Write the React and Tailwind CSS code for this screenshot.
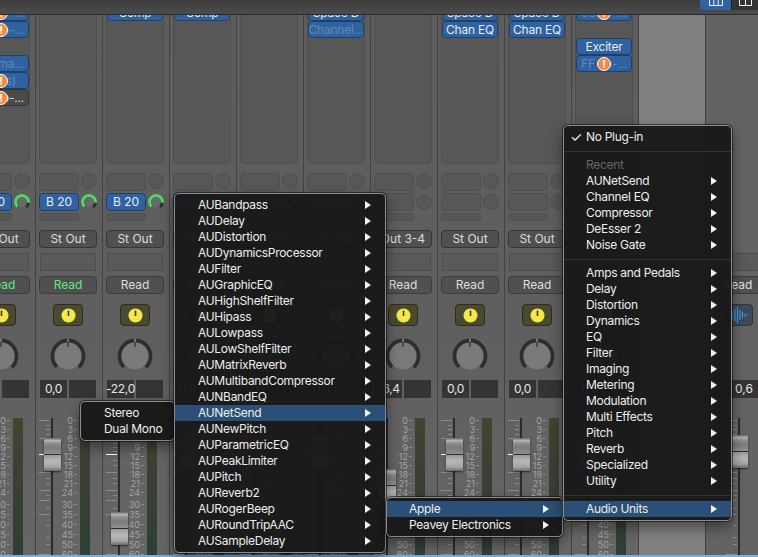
import { Fragment } from "react";

const scale = [
  ["0", 2], ["3", 11], ["6", 20], ["9", 29], ["12", 38], ["15", 47], ["18", 56], ["21", 65],
  ["24", 74], ["30", 86], ["35", 96], ["40", 106], ["45", 116], ["50", 126], ["60", 136],
];

// fader ticks, left of the track: [y, long]
const ticks = [
  [2, 1], [7, 0], [11, 0], [16, 0], [20, 1], [25, 0], [29, 0], [33, 0], [42, 0], [47, 0], [54, 1],
  [60, 0], [65, 0], [72, 1], [77, 0], [82, 1], [90, 0], [96, 1], [107, 0], [119, 0], [126, 0], [136, 1],
];

const auList = [
  "AUBandpass", "AUDelay", "AUDistortion", "AUDynamicsProcessor", "AUFilter", "AUGraphicEQ",
  "AUHighShelfFilter", "AUHipass", "AULowpass", "AULowShelfFilter", "AUMatrixReverb",
  "AUMultibandCompressor", "AUNBandEQ", "AUNetSend", "AUNewPitch", "AUParametricEQ",
  "AUPeakLimiter", "AUPitch", "AUReverb2", "AURogerBeep", "AURoundTripAAC", "AUSampleDelay",
];
const recent = ["AUNetSend", "Channel EQ", "Compressor", "DeEsser 2", "Noise Gate"];
const categories = [
  "Amps and Pedals", "Delay", "Distortion", "Dynamics", "EQ", "Filter", "Imaging", "Metering",
  "Modulation", "Multi Effects", "Pitch", "Reverb", "Specialized", "Utility",
];

const strips = [
  {
    slots: [
      { right: "...", dim: true, warn: true },
      { right: "o-...", dim: true, warn: true },
      null,
      { right: "ma...", dim: true },
      { right: "s)", dim: true, warn: true, pr: "pr-[12px]" },
      { right: "o-...", warn: true, dark: true },
    ],
    send: true, out: "St Out", green: true, value: "0,0", cap: 20,
  },
  { slots: [], send: true, out: "St Out", green: true, value: "0,0", cap: 20 },
  { slots: [{ text: "Comp" }], send: true, out: "St Out", value: "-22,0", cap: 94 },
  { slots: [{ text: "Comp" }], send: true, out: "St Out", value: "0,0", cap: 20 },
  { slots: [], send: true, out: "St Out", value: "0,0", cap: 20 },
  { slots: [{ text: "Space D" }, { text: "Channel...", dim: true }], send: true, out: "St Out", value: "0,0", cap: 20 },
  { slots: [], out: "Out 3-4", value: "-6,4", cap: 51 },
  { slots: [{ text: "Space D" }, { text: "Chan EQ" }], out: "St Out", value: "0,0", cap: 20 },
  { slots: [{ text: "Space D" }, { text: "Chan EQ" }], out: "St Out", value: "0,0", cap: 20 },
  {
    slots: [
      { left: "SSD", right: "...", dim: true, warn: true },
      null,
      { text: "Exciter" },
      { left: "FF", right: "o-...", dim: true, warn: true },
    ],
    out: "St Out", value: "0,0", cap: 20,
  },
];

function Arrow() {
  return (
    <svg width="6" height="8" viewBox="0 0 6 8" className="shrink-0">
      <polygon points="0,0 6,4 0,8" fill="#f2f2f2" />
    </svg>
  );
}

function MenuRow({ label, active, disabled, arrow = true, pad, arrowPad }) {
  return (
    <div
      className={`flex h-4 items-center justify-between whitespace-nowrap text-[12px] leading-4 tracking-[-0.3px] ${pad} ${arrowPad} ${
        active ? "bg-[#2b4f76]" : ""
      } ${disabled ? "text-[#666666]" : "text-[#eeeeee]"}`}
    >
      <span>{label}</span>
      {arrow && <Arrow />}
    </div>
  );
}

function Warn() {
  return (
    <span className="absolute left-[20px] top-[1px] flex h-[14px] w-[14px] items-center justify-center rounded-full border border-white bg-[#f58a3c] text-[11px] font-bold leading-none text-white">
      !
    </span>
  );
}

function Slot({ slot }) {
  if (!slot) return <div className="h-[17px]" />;
  return (
    <div
      className={`relative flex h-[17px] items-center whitespace-nowrap rounded-[4px] border pl-1 text-[12px] leading-none tracking-[-0.2px] ${
        slot.pr || "pr-1"
      } ${slot.dark ? "border-[#353535] bg-[#4a4a4a] text-[#cfcfcf]" : "border-[#1f4068] bg-[#2f629f]"} ${
        slot.dim ? "text-[#5f8abb]" : slot.dark ? "" : "text-[#e6edf5]"
      } ${slot.text ? "justify-center" : "justify-between"}`}
    >
      {slot.text ? (
        <span>{slot.text}</span>
      ) : (
        <Fragment>
          <span>{slot.left}</span>
          <span>{slot.right}</span>
        </Fragment>
      )}
      {slot.warn && <Warn />}
    </div>
  );
}

function SendKnob() {
  return (
    <svg width="16" height="16" viewBox="0 0 16 16" className="shrink-0">
      <circle cx="8" cy="8" r="5" fill="#6a6a6a" />
      <circle cx="8" cy="8" r="6.5" fill="none" stroke="#2f2f2f" strokeWidth="3" strokeDasharray="30.6 40.8" transform="rotate(135 8 8)" />
      <circle cx="8" cy="8" r="6.5" fill="none" stroke="#4fd768" strokeWidth="3" strokeDasharray="25.5 40.8" transform="rotate(135 8 8)" />
    </svg>
  );
}

function PanKnob() {
  return (
    <svg width="36" height="36" viewBox="0 0 36 36">
      <circle cx="18" cy="18" r="13.5" fill="#7a7a7a" />
      <circle cx="18" cy="18" r="15.6" fill="none" stroke="#2e2e2e" strokeWidth="3.6" strokeDasharray="73.5 98" transform="rotate(135 18 18)" />
      <line x1="18" y1="0.5" x2="18" y2="4" stroke="#4fd768" strokeWidth="1.2" />
      <line x1="18" y1="4" x2="18" y2="9" stroke="#2a2a2a" strokeWidth="1.2" />
    </svg>
  );
}

function SoloDial() {
  return (
    <svg width="15" height="15" viewBox="0 0 15 15">
      <circle cx="7.5" cy="7.5" r="7" fill="#f4e84a" />
      <line x1="7.5" y1="2.5" x2="7.5" y2="8" stroke="#3a3a22" strokeWidth="1.6" />
    </svg>
  );
}

function FaderCap({ top, left }) {
  return (
    <div
      className={`absolute h-[33px] w-[17px] rounded-[1px] bg-[linear-gradient(180deg,#6a6a6a_0%,#b5b5b5_8%,#8d8d8d_16%,#7b7b7b_30%,#8f8f8f_47%,#2d2d2d_48%,#2d2d2d_51%,#9a9a9a_52%,#b9b9b9_70%,#a3a3a3_88%,#6b6b6b_100%)] shadow-[0_1px_2px_rgba(0,0,0,0.6)] ${left}`}
      style={{ top }}
    />
  );
}

function Strip({ s }) {
  return (
    <div className="flex w-[67px] shrink-0 flex-col overflow-hidden border-l border-[#424242] bg-[linear-gradient(180deg,#5d5d5d,#5f5f5f_60%,#666666)]">
      <div className="ml-[3px] h-[149px] w-[58px] overflow-hidden rounded-b-[5px] border-x border-b border-[#4f4f4f] bg-[#575757]">
        <div className="-mt-[11px] flex flex-col">
          {s.slots.map((slot, i) => (
            <Slot key={i} slot={slot} />
          ))}
        </div>
      </div>

      <div className="ml-[3px] mt-[9px] flex h-[18px] w-[58px] justify-between">
        <div className="w-10 rounded-[4px] border border-[#4f4f4f] bg-[#575757]" />
        <div className="h-4 w-4 rounded-full border border-[#4f4f4f] bg-[#575757]" />
      </div>

      <div className="ml-[3px] mt-[2px] flex h-[18px] w-[58px] items-center justify-between">
        {s.send ? (
          <div className="flex h-[18px] w-10 items-center justify-center rounded-[4px] border border-[#1f4068] bg-[#2f629f] text-[12px] leading-none text-[#e6edf5]">
            B 20
          </div>
        ) : (
          <div className="h-[18px] w-10 rounded-[4px] border border-[#4f4f4f] bg-[#575757]" />
        )}
        {s.send ? <SendKnob /> : <div className="h-4 w-4 rounded-full border border-[#4f4f4f] bg-[#575757]" />}
      </div>

      <div className="ml-[3px] mt-[2px] h-2 w-10 rounded-[3px] border border-[#4f4f4f] bg-[#575757]" />

      <div className="ml-[3px] mt-[9px] flex h-[18px] w-[58px] items-center justify-center rounded-[4px] border border-[#363636] bg-[#505050] text-[12px] leading-none text-[#dddddd]">
        {s.out}
      </div>

      <div className="ml-1 mt-[5px] h-[18px] w-14 border border-[#4d4d4d] bg-[#5a5a5a]" />

      <div
        className={`ml-[3px] mt-[5px] flex h-[18px] w-[58px] items-center justify-center rounded-[4px] border border-[#3c3c3c] bg-[#505050] text-[12px] leading-none ${
          s.green ? "text-[#62e884]" : "text-[#dddddd]"
        }`}
      >
        Read
      </div>

      <div className="ml-[17px] mt-[10px] flex h-[22px] w-[30px] items-center justify-center rounded-[4px] border border-[#2e2d1c] bg-[#4b4930]">
        <SoloDial />
      </div>

      <div className="ml-[14px] mt-3 h-9 w-9">
        <PanKnob />
      </div>

      <div className="ml-1 mt-[6px] flex h-[18px] gap-[2px]">
        <div className="flex w-[27px] items-center justify-center bg-[#343434] text-[12px] leading-none tracking-[-0.3px] text-[#e6e6e6]">
          {s.value}
        </div>
        <div className="w-[27px] bg-[#343434]" />
      </div>

      <div className="relative mt-5 h-[137px] w-full">
        <div className="absolute bottom-0 left-[15px] top-0 w-[2px] bg-[#2c2c2c]" />
        {ticks.map(([y, long]) => (
          <div
            key={y}
            className={`absolute h-px bg-[#8c8c8c] ${long ? "left-[3px] w-[11px]" : "left-[10px] w-1"}`}
            style={{ top: y }}
          />
        ))}
        <div className="absolute left-[3px] top-[36px] h-px w-[11px] bg-white" />
        <FaderCap top={s.cap} left="left-[8px]" />
        {scale.map(([label, y]) => (
          <div key={label} className="absolute left-[20px] flex h-[10px] w-[21px] items-center justify-end gap-[1px] text-[9px] leading-none text-[#a3a3a3]" style={{ top: y - 5 }}>
            <span>{label}</span>
            <span className="h-px w-[3px] bg-[#8c8c8c]" />
          </div>
        ))}
        <div className="absolute bottom-0 left-[44px] top-0 w-[10px] bg-[linear-gradient(180deg,#46432f_0%,#3d4034_30%,#2f3f33_100%)]" />
      </div>
    </div>
  );
}

function MasterStrip() {
  return (
    <div className="flex w-[67px] shrink-0 flex-col overflow-hidden border-l border-[#424242] bg-[#636363]">
      <div className="ml-1 mt-[238px] h-[18px] w-14 border border-[#4d4d4d] bg-[#5a5a5a]" />
      <div className="ml-[3px] mt-[5px] flex h-[18px] w-[58px] items-center justify-center rounded-[4px] border border-[#3c3c3c] bg-[#505050] text-[12px] leading-none text-[#dddddd]">
        Read
      </div>
      <div className="ml-[17px] mt-[10px] flex h-[22px] w-[30px] items-center justify-center rounded-[4px] border border-[#2c3744] bg-[#3d4a58]">
        <svg width="22" height="16" viewBox="0 0 22 16" stroke="#3ea0f0" strokeWidth="1.1">
          <line x1="3" y1="6" x2="3" y2="10" />
          <line x1="5.5" y1="4" x2="5.5" y2="12" />
          <line x1="8" y1="2" x2="8" y2="14" />
          <line x1="10.5" y1="0" x2="10.5" y2="16" />
          <line x1="13" y1="3" x2="13" y2="13" />
          <line x1="15.5" y1="5" x2="15.5" y2="11" />
          <line x1="18" y1="6.5" x2="18" y2="9.5" />
          <line x1="20" y1="7.5" x2="20" y2="8.5" />
        </svg>
      </div>
      <div className="ml-1 mt-[54px] flex h-[18px] w-[58px] items-center justify-center bg-[#343434] pl-[10px] text-[12px] leading-none text-[#e6e6e6]">
        0,6
      </div>
      <div className="relative mt-5 h-[137px] w-full">
        <div className="absolute bottom-0 left-[32px] top-0 w-[2px] bg-[#2c2c2c]" />
        {ticks.map(([y, long]) => (
          <div
            key={y}
            className={`absolute h-px bg-[#8c8c8c] ${long ? "left-[20px] w-[11px]" : "left-[27px] w-1"}`}
            style={{ top: y }}
          />
        ))}
        <FaderCap top={17} left="left-[25px]" />
      </div>
    </div>
  );
}

const menuBox =
  "absolute rounded-[5px] border border-[#8c8c8c] bg-[#191919]/[0.97] shadow-[0_0_0_1px_rgba(0,0,0,0.5),0_6px_14px_rgba(0,0,0,0.45)]";

export default function App() {
  return (
    <div className="relative flex h-[557px] w-[758px] flex-col overflow-hidden bg-[#5f5f5f] font-['Inter','Liberation_Sans','Noto_Sans',sans-serif]">
      {/* top toolbar with the two view buttons */}
      <div className="flex h-[15px] shrink-0 justify-end border-b border-[#2a2a2a] bg-[linear-gradient(180deg,#3d3d3d,#4c4c4c)]">
        <div className="flex h-[10px]">
          <div className="flex w-[32px] items-start justify-center rounded-bl-[4px] border-r border-[#222222] bg-[#2f629f]">
            <svg width="14" height="6" viewBox="0 0 14 6" fill="none" stroke="#f2f2f2">
              <path d="M0.5 0V5.5H13.5V0M4.8 0V5.5M9.2 0V5.5" />
            </svg>
          </div>
          <div className="flex w-[26px] items-start justify-center bg-[#333333]">
            <svg width="13" height="6" viewBox="0 0 13 6" fill="none" stroke="#f2f2f2">
              <path d="M0.5 0V5.5H12.5V0M6.5 0V5.5" />
            </svg>
          </div>
        </div>
      </div>

      {/* mixer strips */}
      <div className="-ml-[32px] flex min-h-0 flex-1">
        {strips.map((s, i) => (
          <Strip key={i} s={s} />
        ))}
        <div className="w-[67px] shrink-0 border-l border-[#424242] bg-[#808080]" />
        <MasterStrip />
      </div>
      <div className="h-[2px] shrink-0 bg-[#6fb0e8]" />

      {/* plug-in menus */}
      <div className={`${menuBox} left-[80px] top-[401px] w-[95px] py-[3px]`}>
        <MenuRow label="Stereo" arrow={false} pad="pl-[23px]" arrowPad="pr-2" />
        <MenuRow label="Dual Mono" arrow={false} pad="pl-[23px]" arrowPad="pr-2" />
      </div>

      <div className={`${menuBox} left-[174px] top-[193px] w-[212px] py-[3px]`}>
        {auList.map((name) => (
          <MenuRow key={name} label={name} active={name === "AUNetSend"} pad="pl-[23px]" arrowPad="pr-[14px]" />
        ))}
      </div>

      <div className={`${menuBox} left-[386px] top-[497px] w-[177px] py-[3px]`}>
        <MenuRow label="Apple" active pad="pl-[22px]" arrowPad="pr-[13px]" />
        <MenuRow label="Peavey Electronics" pad="pl-[22px]" arrowPad="pr-[13px]" />
      </div>

      <div className={`${menuBox} left-[563px] top-[125px] w-[169px] py-[3px]`}>
        <div className="relative">
          <span className="absolute left-[6px] top-0 text-[14px] leading-4 text-[#eeeeee]">✓</span>
          <MenuRow label="No Plug-in" arrow={false} pad="pl-[22px]" arrowPad="pr-[14px]" />
        </div>
        <div className="my-[5.5px] h-px bg-[#333333]" />
        <MenuRow label="Recent" disabled arrow={false} pad="pl-[22px]" arrowPad="pr-[14px]" />
        {recent.map((name) => (
          <MenuRow key={name} label={name} pad="pl-[22px]" arrowPad="pr-[14px]" />
        ))}
        <div className="my-[5.5px] h-px bg-[#333333]" />
        {categories.map((name) => (
          <MenuRow key={name} label={name} pad="pl-[22px]" arrowPad="pr-[14px]" />
        ))}
        <div className="my-[5.5px] h-px bg-[#333333]" />
        <MenuRow label="Audio Units" active pad="pl-[22px]" arrowPad="pr-[14px]" />
      </div>
    </div>
  );
}
